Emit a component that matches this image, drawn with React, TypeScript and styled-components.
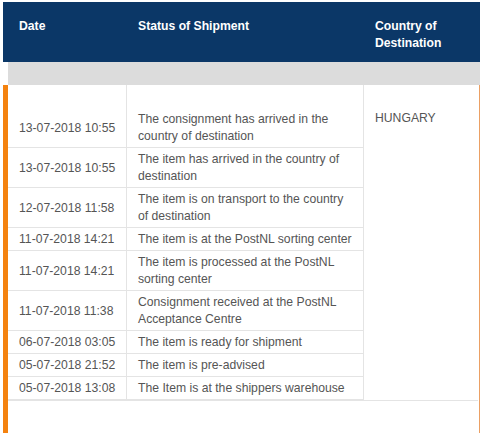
import styled, { createGlobalStyle } from "styled-components";

const GlobalStyle = createGlobalStyle`
  html, body {
    margin: 0;
    padding: 0;
    background: #ffffff;
    overflow: hidden;
  }
  body {
    font-family: "Liberation Sans", Arial, sans-serif;
  }
`;

const COLUMNS = "119px 237px 1fr";

const Wrapper = styled.div`
  margin: 2px 0 0 3px;
  width: 477px;
`;

const HeaderRow = styled.div`
  display: grid;
  grid-template-columns: ${COLUMNS};
  height: 60px;
  padding-left: 5px;
  background-color: #0b3767;
  box-sizing: border-box;
`;

const HeaderCell = styled.div`
  padding: 16px 11px 0;
  color: #ffffff;
  font-size: 12.2px;
  font-weight: 700;
  line-height: 17px;
`;

const BandWrap = styled.div`
  padding-left: 5px;
`;

const GreyBand = styled.div`
  height: 23px;
  background-color: #dcdcdc;
`;

const Body = styled.div`
  height: 348px;
  border-left: 5px solid #f4820f;
  border-right: 1px solid #eba064;
`;

const Table = styled.div`
  display: grid;
  grid-template-columns: ${COLUMNS};
  border-bottom: 1px solid #e4e4e4;
  margin-right: 1px;
`;

const Spacer = styled.div<{ $divider?: boolean }>`
  height: 23px;
  border-right: ${({ $divider }) => ($divider ? "1px solid #e4e4e4" : "none")};
`;

const Cell = styled.div`
  display: flex;
  align-items: center;
  padding: 3px 11px 2px;
  border-right: 1px solid #e4e4e4;
  border-bottom: 1px solid #e4e4e4;
  color: #555555;
  font-size: 12.2px;
  line-height: 17px;
`;

const DateCell = styled(Cell)`
  white-space: nowrap;
`;

const CountryCell = styled.div<{ $rows: number }>`
  grid-column: 3;
  grid-row: 2 / span ${({ $rows }) => $rows};
  padding: 2px 11px;
  color: #555555;
  font-size: 12.2px;
  line-height: 17px;
`;

const events = [
  ["13-07-2018 10:55", "The consignment has arrived in the country of destination"],
  ["13-07-2018 10:55", "The item has arrived in the country of destination"],
  ["12-07-2018 11:58", "The item is on transport to the country of destination"],
  ["11-07-2018 14:21", "The item is at the PostNL sorting center"],
  ["11-07-2018 14:21", "The item is processed at the PostNL sorting center"],
  ["11-07-2018 11:38", "Consignment received at the PostNL Acceptance Centre"],
  ["06-07-2018 03:05", "The item is ready for shipment"],
  ["05-07-2018 21:52", "The item is pre-advised"],
  ["05-07-2018 13:08", "The Item is at the shippers warehouse"],
];

export default function App() {
  return (
    <>
      <GlobalStyle />
      <Wrapper>
        <HeaderRow>
          <HeaderCell>Date</HeaderCell>
          <HeaderCell>Status of Shipment</HeaderCell>
          <HeaderCell>
            Country of
            <br />
            Destination
          </HeaderCell>
        </HeaderRow>

        <BandWrap>
          <GreyBand />
        </BandWrap>

        <Body>
          <Table>
            <Spacer $divider />
            <Spacer $divider />
            <Spacer />
            {events.map(([date, status], i) => (
              <div key={i} style={{ display: "contents" }}>
                <DateCell style={{ gridRow: i + 2, gridColumn: 1 }}>{date}</DateCell>
                <Cell style={{ gridRow: i + 2, gridColumn: 2 }}>{status}</Cell>
              </div>
            ))}
            <CountryCell $rows={events.length}>HUNGARY</CountryCell>
          </Table>
        </Body>
      </Wrapper>
    </>
  );
}
